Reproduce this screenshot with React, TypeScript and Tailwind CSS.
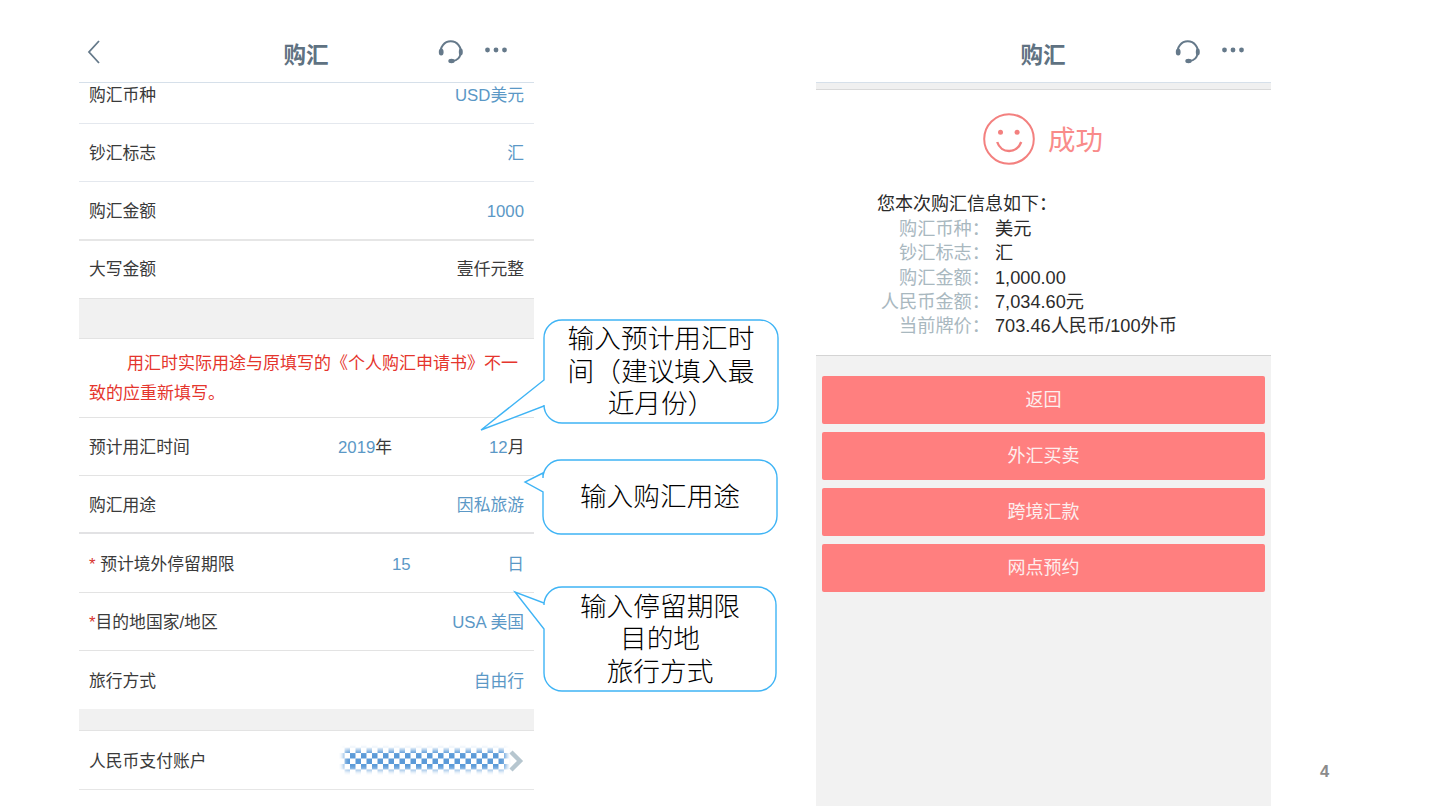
import type { ReactNode } from "react";

const fontStack = "font-['Liberation_Sans','Noto_Sans_CJK_SC',sans-serif]";

function Headset() {
  return (
    <svg width="26" height="24" viewBox="0 0 26 24" className="text-[#65798a]">
      <path
        d="M3 13.5 A10 10 0 1 1 22.5 13.5 C22 18 19 20.5 14.5 21"
        fill="none"
        stroke="currentColor"
        strokeWidth="2"
      />
      <ellipse cx="3.2" cy="12" rx="2.4" ry="3.6" fill="currentColor" />
      <ellipse cx="22.8" cy="12" rx="2" ry="3.4" fill="currentColor" />
      <ellipse cx="13.5" cy="21" rx="3.2" ry="2.2" fill="currentColor" />
    </svg>
  );
}

function MoreDots() {
  return (
    <svg width="24" height="6" viewBox="0 0 24 6" className="text-[#65798a]">
      <circle cx="3.5" cy="3" r="2.4" fill="currentColor" />
      <circle cx="12" cy="3" r="2.4" fill="currentColor" />
      <circle cx="20.5" cy="3" r="2.4" fill="currentColor" />
    </svg>
  );
}

function Header({ back }: { back?: boolean }) {
  return (
    <header className="relative flex h-[83px] shrink-0 items-center border-b border-[#d6e0ea] bg-white">
      {back && (
        <svg
          width="14"
          height="24"
          viewBox="0 0 14 24"
          className="absolute left-[8px] top-[40px] text-[#65798a]"
        >
          <path d="M12 1 L2 12 L12 23" fill="none" stroke="currentColor" strokeWidth="1.8" />
        </svg>
      )}
      <h1 className="w-full pt-[29px] pr-[1px] text-center text-[22.5px] font-semibold leading-[32px] text-[#5f7282]">
        购汇
      </h1>
      <div className="absolute left-[359px] top-[40px]">
        <Headset />
      </div>
      <div className="absolute left-[405px] top-[47px]">
        <MoreDots />
      </div>
    </header>
  );
}

function Row({
  className,
  children,
}: {
  className: string;
  children: ReactNode;
}) {
  return (
    <div className={`flex items-center whitespace-nowrap px-[10px] text-[16.8px] text-[#3a3a3a] ${className}`}>
      {children}
    </div>
  );
}

function Value({ children, dark }: { children: ReactNode; dark?: boolean }) {
  return <span className={`ml-auto ${dark ? "text-[#3a3a3a]" : "text-[#5b98c6]"}`}>{children}</span>;
}

function Mosaic() {
  return (
    <svg width="172" height="36" viewBox="0 0 172 36" className="absolute left-[260px] top-[11px]">
      <defs>
        <pattern id="checker" width="11" height="11" patternUnits="userSpaceOnUse">
          <rect width="11" height="11" fill="#ffffff" />
          <rect width="5.5" height="5.5" fill="#5b9ad8" />
          <rect x="5.5" y="5.5" width="5.5" height="5.5" fill="#5b9ad8" />
        </pattern>
        <filter id="soft" x="-10%" y="-50%" width="120%" height="200%">
          <feGaussianBlur stdDeviation="2.4" />
        </filter>
        <mask id="fade">
          <rect x="5" y="8" width="162" height="20" fill="#ffffff" filter="url(#soft)" />
        </mask>
      </defs>
      <rect width="172" height="36" fill="url(#checker)" mask="url(#fade)" />
    </svg>
  );
}

function Callout({
  box,
  width,
  height,
  tail,
  children,
}: {
  box: string;
  width: number;
  height: number;
  tail: [number, number, number, number];
  children: ReactNode;
}) {
  const r = 18;
  const [y1, tipX, tipY, y2] = tail;
  const d = `M${r} 0 H${width - r} A${r} ${r} 0 0 1 ${width} ${r} V${height - r} A${r} ${r} 0 0 1 ${width - r} ${height} H${r} A${r} ${r} 0 0 1 0 ${height - r} V${y2} L${tipX} ${tipY} L0 ${y1} V${r} A${r} ${r} 0 0 1 ${r} 0 Z`;
  return (
    <div className={`absolute ${box}`}>
      <svg
        width={width}
        height={height}
        viewBox={`0 0 ${width} ${height}`}
        className="absolute left-0 top-0 overflow-visible"
      >
        <path d={d} fill="#ffffff" stroke="#3fb4f5" strokeWidth="1.4" />
      </svg>
      <div className="relative flex h-full items-center justify-center px-[20px] pt-[1px] text-center text-[26.7px] font-light leading-[32.5px] text-black">
        {children}
      </div>
    </div>
  );
}

function FormPanel() {
  return (
    <section className="relative w-[455px] shrink-0">
      <Header back />
      <Row className="h-[41px] border-b border-[#e4e8ee] pb-[15px]">
        购汇币种
        <Value>USD美元</Value>
      </Row>
      <Row className="h-[58px] border-b border-[#e4e8ee] pt-[3px]">
        钞汇标志
        <Value>汇</Value>
      </Row>
      <Row className="h-[59px] border-b-2 border-[#e6e6e6] pt-[3px]">
        购汇金额
        <Value>1000</Value>
      </Row>
      <Row className="h-[57px] pt-[1px]">
        大写金额
        <Value dark>壹仟元整</Value>
      </Row>
      <div className="h-[41px] border-y border-[#e3e3e3] bg-[#f1f1f1]" />
      <div className="h-[79px] border-b border-[#e3e3e3] px-[10px] pt-[10px] text-[17px] leading-[30px] text-[#e5352d]">
        <p className="indent-[38px]">用汇时实际用途与原填写的《个人购汇申请书》不一致的应重新填写。</p>
      </div>
      <Row className="h-[58px] border-b border-[#e3e3e3] pt-[3px]">
        <span className="w-[249px] shrink-0">预计用汇时间</span>
        <span className="w-[151px] shrink-0">
          <span className="text-[#5b98c6]">2019</span>年
        </span>
        <span>
          <span className="text-[#5b98c6]">12</span>月
        </span>
      </Row>
      <Row className="h-[58px] border-b-2 border-[#e2e2e4] pt-[3px]">
        购汇用途
        <Value>因私旅游</Value>
      </Row>
      <Row className="h-[59px] border-b border-[#e3e3e3] pt-[3px]">
        <span className="w-[303px] shrink-0">
          <span className="text-[#d8332f]">*</span> 预计境外停留期限
        </span>
        <span className="text-[#5b98c6]">15</span>
        <Value>日</Value>
      </Row>
      <Row className="h-[58px] border-b border-[#e3e3e3] pt-[3px]">
        <span>
          <span className="text-[#d8332f]">*</span>目的地国家/地区
        </span>
        <Value>USA 美国</Value>
      </Row>
      <Row className="h-[58px] pt-[3px]">
        旅行方式
        <Value>自由行</Value>
      </Row>
      <div className="h-[22px] border-b border-[#e3e3e3] bg-[#f1f1f1]" />
      <Row className="relative h-[59px] border-b border-[#e6e6e6] pt-[3px]">
        人民币支付账户
        <Mosaic />
        <svg width="16" height="22" viewBox="0 0 16 22" className="relative -top-[1px] ml-auto text-[#b6c6cf]">
          <path d="M3 2 L12 11 L3 20" fill="none" stroke="currentColor" strokeWidth="4.4" />
        </svg>
      </Row>
    </section>
  );
}

const summary = [
  ["购汇币种：", "美元"],
  ["钞汇标志：", "汇"],
  ["购汇金额：", "1,000.00"],
  ["人民币金额：", "7,034.60元"],
  ["当前牌价：", "703.46人民币/100外币"],
];

const actions = ["返回", "外汇买卖", "跨境汇款", "网点预约"];

function ResultPanel() {
  return (
    <section className="ml-[282px] flex h-[806px] w-[455px] shrink-0 flex-col">
      <Header />
      <div className="h-[7px] border-b border-[#d9d9d9] bg-[#f0f0f0]" />
      <div className="h-[266px] border-b border-[#d4d4d4] bg-white">
        <div className="flex h-[101px] items-center justify-center">
          <svg width="52" height="52" viewBox="0 0 52 52" className="mr-[12px] -translate-x-[1px] -translate-y-[2px] text-[#f3807f]">
            <circle cx="26" cy="26" r="24.8" fill="none" stroke="currentColor" strokeWidth="2" />
            <circle cx="17.5" cy="19.3" r="2.5" fill="currentColor" />
            <circle cx="34.1" cy="19.3" r="2.5" fill="currentColor" />
            <path d="M14.2 29 C18 41 34 41 38.2 29" fill="none" stroke="currentColor" strokeWidth="2.4" />
          </svg>
          <span className="text-[27.5px] leading-[36px] text-[#f98b8a]">成功</span>
        </div>
        <p className="pl-[61px] text-[18px] leading-[26px] text-[#2b2b2b]">您本次购汇信息如下：</p>
        <dl className="grid grid-cols-[174px_1fr] gap-x-[5px] text-[18.2px] leading-[24.3px]">
          {summary.map(([label, value]) => (
            <div key={label} className="contents">
              <dt className="text-right text-[#a9b8bf]">{label}</dt>
              <dd className="text-[#2b2b2b]">{value}</dd>
            </div>
          ))}
        </dl>
      </div>
      <div className="flex flex-1 flex-col gap-[8px] bg-[#f2f2f2] px-[6px] pt-[20px]">
        {actions.map((action) => (
          <button
            key={action}
            className="h-[48px] rounded-[2px] bg-[#ff7f7f] text-[18px] text-[#fdeeee]"
          >
            {action}
          </button>
        ))}
      </div>
    </section>
  );
}

export default function App() {
  return (
    <main className={`relative flex h-[806px] w-[1440px] overflow-hidden bg-white pl-[79px] ${fontStack}`}>
      <FormPanel />
      <ResultPanel />

      <Callout box="left-[544px] top-[320px] w-[234px] h-[103px]" width={234} height={103} tail={[60, -63, 110, 86]}>
        <span>输入预计用汇时间（建议填入最近月份）</span>
      </Callout>
      <Callout box="left-[543px] top-[460px] w-[234px] h-[74px]" width={234} height={74} tail={[13, -18, 22, 32]}>
        <span>输入购汇用途</span>
      </Callout>
      <Callout box="left-[544px] top-[587px] w-[232px] h-[104px]" width={232} height={104} tail={[16, -29, 5, 42]}>
        <span>
          输入停留期限
          <br />
          目的地
          <br />
          旅行方式
        </span>
      </Callout>

      <span className="absolute left-[1320px] top-[761px] text-[16.5px] font-bold leading-[20px] text-[#8b8b8b]">4</span>
    </main>
  );
}
